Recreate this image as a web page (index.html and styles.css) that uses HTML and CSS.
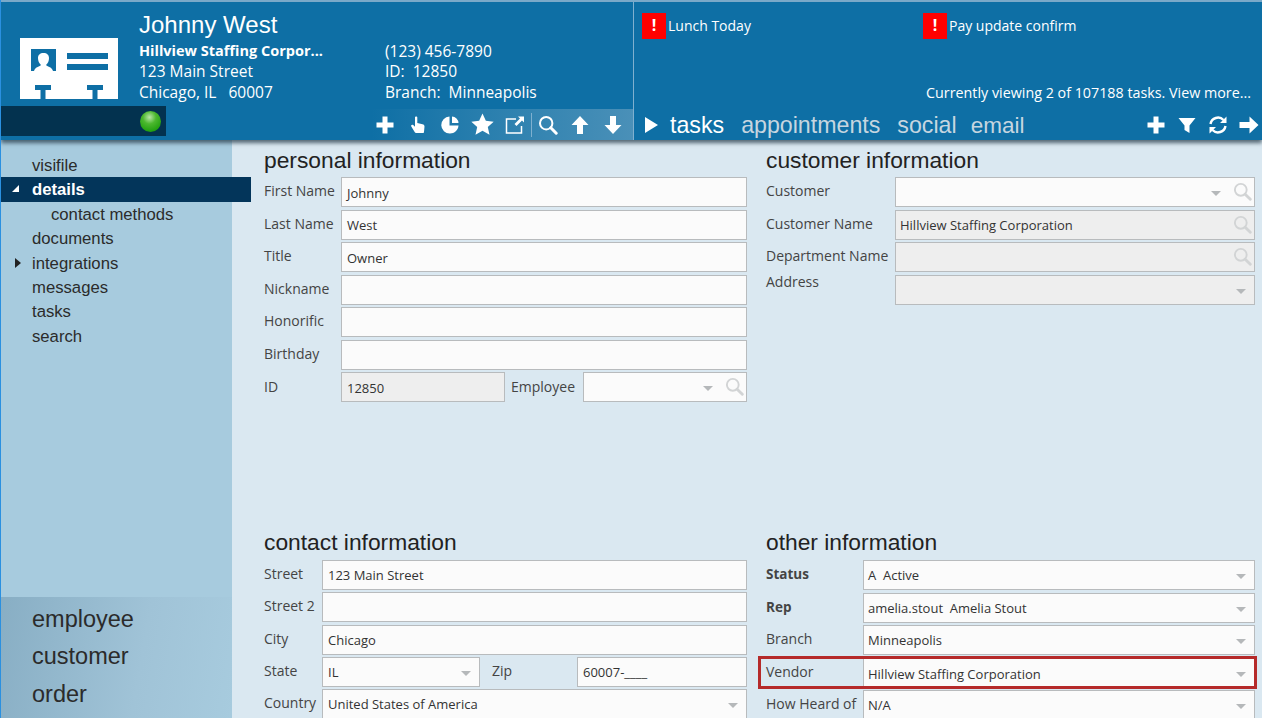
FILE: index.html
```html
<!DOCTYPE html>
<html lang="en">

<head>
    <meta charset="UTF-8">
    <title>Johnny West</title>
    <link rel="stylesheet" href="styles.css">
</head>

<body>
    <svg class="sprites" width="0" height="0">
        <symbol id="i-search" viewBox="0 0 20 20">
            <circle cx="8.2" cy="8.2" r="6.2" fill="none" stroke="currentColor" stroke-width="2" />
            <path d="M12.8 12.8l5.4 5.4" fill="none" stroke="currentColor" stroke-width="3" stroke-linecap="round" />
        </symbol>
        <symbol id="i-plus" viewBox="0 0 20 20">
            <path d="M7.5 1.5h5v6h6v5h-6v6h-5v-6h-6v-5h6z" fill="currentColor" />
        </symbol>
    </svg>

    <header class="topbar">
        <section class="contact-panel">
            <div class="contact-top">
                <svg class="id-card" viewBox="0 0 98 61">
                    <rect width="98" height="61" fill="#fff" />
                    <rect x="11" y="11" width="25" height="22" fill="#0e6fa5" />
                    <path d="M14 33c1-4 5-4 7-6-2-2-3-4-3-7 0-3 2-5 5.500-5s5.500 2 5.500 5c0 3-1 5-3 7 2 2 6 2 7 6z" fill="#fff" />
                    <rect x="47" y="15" width="41" height="6" fill="#0e6fa5" />
                    <rect x="47" y="26" width="41" height="6" fill="#0e6fa5" />
                    <path d="M15 47h16v5h-5.500v9h-5v-9H15zM67 47h16v5h-5.500v9h-5v-9H67z" fill="#0e6fa5" />
                </svg>
                <div class="contact-text">
                    <h1>Johnny West</h1>
                    <div class="contact-columns">
                        <div class="contact-col">
                            <strong>Hillview Staffing Corpor...</strong>
                            <span>123 Main Street</span>
                            <span>Chicago, IL &nbsp; 60007</span>
                        </div>
                        <div class="contact-col">
                            <span>(123) 456-7890</span>
                            <span>ID: &nbsp;12850</span>
                            <span>Branch: &nbsp;Minneapolis</span>
                        </div>
                    </div>
                </div>
            </div>
            <div class="contact-bottom">
                <div class="status-bar"><span class="led"></span></div>
                <div class="toolbar">
                    <svg class="tool"><use href="#i-plus" /></svg>
                    <svg class="tool" viewBox="0 0 20 20">
                        <path d="M7 2.500c0-1.400 2.300-1.400 2.300 0V8l5.200 1.200c1.300.3 2 1.200 2 2.400l-.5 5.400c0 .6-.5 1-1 1H8c-.5 0-.9-.2-1.200-.7L3.300 11.500c-.7-1.200.8-2.400 1.900-1.400L7 11.800z" fill="currentColor" />
                    </svg>
                    <svg class="tool" viewBox="0 0 20 20">
                        <path d="M9.500 1.500v9h9c-.3 4.600-4 8-8.500 8a8.500 8.500 0 0 1-.5-17zM12 1.500a6.800 6.800 0 0 1 6.500 6.500H12zM12.500 12.500h5.300a8 8 0 0 1-5.300 5.300z" fill="currentColor" />
                    </svg>
                    <svg class="tool tool-star" viewBox="0 0 20 20">
                        <path d="M10 .5l2.900 6.300 6.800.7-5.100 4.600 1.500 6.800-6.100-3.500-6.100 3.500 1.500-6.800L.3 7.500l6.800-.7z" fill="currentColor" />
                    </svg>
                    <svg class="tool" viewBox="0 0 20 20">
                        <path d="M11 4H1.500v14h15v-7" fill="none" stroke="currentColor" stroke-width="1.500" />
                        <path d="M13 1.500h6v6l-2-2-5.500 5.500-2-2L15 3.500z" fill="currentColor" />
                    </svg>
                    <span class="tool-divider"></span>
                    <svg class="tool"><use href="#i-search" /></svg>
                    <svg class="tool" viewBox="0 0 20 20">
                        <path d="M10 1l8.500 9H13v9H7v-9H1.500z" fill="currentColor" />
                    </svg>
                    <svg class="tool" viewBox="0 0 20 20">
                        <path d="M10 19l8.500-9H13V1H7v9H1.500z" fill="currentColor" />
                    </svg>
                </div>
            </div>
        </section>

        <section class="activity-panel">
            <div class="alerts">
                <div class="alert"><span class="alert-mark">!</span>Lunch Today</div>
                <div class="alert"><span class="alert-mark">!</span>Pay update confirm</div>
            </div>
            <p class="task-count">Currently viewing 2 of 107188 tasks. View more...</p>
            <div class="tabs">
                <svg class="tab-play" viewBox="0 0 13 16">
                    <path d="M0 0l13 8-13 8z" fill="#fff" />
                </svg>
                <span class="tab active">tasks</span>
                <span class="tab">appointments</span>
                <span class="tab">social</span>
                <span class="tab tab-email">email</span>
                <div class="tab-tools">
                    <svg class="tool"><use href="#i-plus" /></svg>
                    <svg class="tool" viewBox="0 0 20 20">
                        <path d="M1.500 3h17l-6 7.500V18l-5-3v-4.500z" fill="currentColor" />
                    </svg>
                    <svg class="tool" viewBox="0 0 20 20">
                        <path d="M2.500 9a7.600 7.600 0 0 1 13-4" fill="none" stroke="currentColor" stroke-width="2.400" />
                        <path d="M17.500 11a7.600 7.600 0 0 1-13 4" fill="none" stroke="currentColor" stroke-width="2.400" />
                        <path d="M18.500 1.500v6.500H12zM1.500 18.500V12H8z" fill="currentColor" />
                    </svg>
                    <svg class="tool" viewBox="0 0 20 20">
                        <path d="M19.500 10l-9-8.500V7H.5v6h10v5.500z" fill="currentColor" />
                    </svg>
                </div>
            </div>
        </section>
    </header>

    <div class="page">
        <aside class="sidebar">
            <nav class="side-nav">
                <a>visifile</a>
                <a class="selected"><span class="caret-open"></span>details</a>
                <a class="sub">contact methods</a>
                <a>documents</a>
                <a><span class="caret-closed"></span>integrations</a>
                <a>messages</a>
                <a>tasks</a>
                <a>search</a>
            </nav>
            <div class="side-links">
                <a>employee</a>
                <a>customer</a>
                <a>order</a>
            </div>
        </aside>

        <main class="content">
            <section class="form form-personal">
                <h2>personal information</h2>
                <div class="row"><label>First Name</label><div class="field"><span>Johnny</span></div></div>
                <div class="row"><label>Last Name</label><div class="field"><span>West</span></div></div>
                <div class="row"><label>Title</label><div class="field"><span>Owner</span></div></div>
                <div class="row"><label>Nickname</label><div class="field"></div></div>
                <div class="row"><label>Honorific</label><div class="field"></div></div>
                <div class="row"><label>Birthday</label><div class="field"></div></div>
                <div class="row row-low">
                    <label>ID</label>
                    <div class="field locked id-field"><span>12850</span></div>
                    <label class="inline-label employee-label">Employee</label>
                    <div class="field">
                        <i class="arrow"></i>
                        <svg class="lookup"><use href="#i-search" /></svg>
                    </div>
                </div>
            </section>

            <section class="form form-customer">
                <h2>customer information</h2>
                <div class="row">
                    <label>Customer</label>
                    <div class="field">
                        <i class="arrow"></i>
                        <svg class="lookup"><use href="#i-search" /></svg>
                    </div>
                </div>
                <div class="row">
                    <label>Customer Name</label>
                    <div class="field locked">
                        <span>Hillview Staffing Corporation</span>
                        <svg class="lookup"><use href="#i-search" /></svg>
                    </div>
                </div>
                <div class="row">
                    <label>Department Name</label>
                    <div class="field locked"><svg class="lookup"><use href="#i-search" /></svg></div>
                </div>
                <div class="row row-top">
                    <label>Address</label>
                    <div class="field locked"><i class="arrow arrow-end"></i></div>
                </div>
            </section>

            <section class="form form-contact">
                <h2>contact information</h2>
                <div class="row"><label>Street</label><div class="field"><span>123 Main Street</span></div></div>
                <div class="row"><label>Street 2</label><div class="field"></div></div>
                <div class="row"><label>City</label><div class="field"><span>Chicago</span></div></div>
                <div class="row">
                    <label>State</label>
                    <div class="field state-field"><span>IL</span><i class="arrow arrow-end"></i></div>
                    <label class="inline-label zip-label">Zip</label>
                    <div class="field"><span>60007-____</span></div>
                </div>
                <div class="row">
                    <label>Country</label>
                    <div class="field"><span>United States of America</span><i class="arrow arrow-end"></i></div>
                </div>
            </section>

            <section class="form form-other">
                <h2>other information</h2>
                <div class="row">
                    <label class="strong">Status</label>
                    <div class="field"><span>A &nbsp;Active</span><i class="arrow arrow-end"></i></div>
                </div>
                <div class="row">
                    <label class="strong">Rep</label>
                    <div class="field"><span>amelia.stout &nbsp;Amelia Stout</span><i class="arrow arrow-end"></i></div>
                </div>
                <div class="row">
                    <label>Branch</label>
                    <div class="field"><span>Minneapolis</span><i class="arrow arrow-end"></i></div>
                </div>
                <div class="row flagged">
                    <label>Vendor</label>
                    <div class="field"><span>Hillview Staffing Corporation</span><i class="arrow arrow-end"></i></div>
                </div>
                <div class="row">
                    <label>How Heard of</label>
                    <div class="field"><span>N/A</span><i class="arrow arrow-end"></i></div>
                </div>
            </section>
        </main>
    </div>
</body>

</html>
```

FILE: styles.css
```css
* {
    margin: 0;
    padding: 0;
    box-sizing: border-box;
}

html,
body {
    height: 718px;
    overflow: hidden;
}

body {
    display: flex;
    flex-direction: column;
    font-family: "Open Sans", "Noto Sans", sans-serif;
    background: #dae8f1;
    border-left: 1px solid #2a90e0;
    color: #333;
}

.sprites {
    position: absolute;
}

/* top bar */
.topbar {
    position: relative;
    z-index: 2;
    display: flex;
    height: 140px;
    flex-shrink: 0;
    background: #0e6fa5;
    border-top: 2px solid #7aa9c9;
    box-shadow: 0 3px 4px rgba(40, 60, 75, 0.75);
    color: #fff;
}

.contact-panel {
    display: flex;
    flex-direction: column;
    justify-content: space-between;
    width: 633px;
    flex-shrink: 0;
    border-right: 1px solid #7fb0cf;
}

.contact-top {
    display: flex;
}

.id-card {
    width: 98px;
    height: 61px;
    margin: 36px 0 0 19px;
    flex-shrink: 0;
}

.contact-text {
    margin-left: 21px;
}

.contact-text h1 {
    font-family: "Liberation Sans", Arial, sans-serif;
    font-size: 24px;
    font-weight: 400;
    line-height: 28px;
    margin-top: 9px;
}

.contact-columns {
    display: flex;
    margin-top: 1.5px;
}

.contact-col {
    display: flex;
    flex-direction: column;
    width: 246px;
    font-size: 15.5px;
    line-height: 20.7px;
}

.contact-col strong {
    font-size: 14.5px;
}

.contact-bottom {
    display: flex;
    justify-content: space-between;
    align-items: flex-start;
    height: 32px;
}

.status-bar {
    display: flex;
    justify-content: flex-end;
    align-items: center;
    width: 165px;
    height: 30px;
    padding-right: 5px;
    margin-top: -2px;
    background: #03324f;
}

.led {
    width: 21px;
    height: 21px;
    border-radius: 50%;
    background: radial-gradient(circle at 45% 30%, #b9e6a8 0, #4cb82f 35%, #22a010 75%, #2f7f1f 100%);
}

.toolbar {
    display: flex;
    align-items: center;
    gap: 12.6px;
    width: 262px;
    height: 31px;
    margin-top: 1px;
    padding-left: 4px;
    background: linear-gradient(90deg, #0e6fa5 0, #2a7fae 45%, #4a90b8 100%);
}

.tool {
    width: 20px;
    height: 20px;
    color: #fff;
}

.tool-star {
    width: 23px;
    height: 23px;
    margin: 0 -1.5px;
}

.tool-divider {
    width: 1px;
    height: 24px;
    margin: 0 -7px;
    background: #7fb0cf;
}

.activity-panel {
    display: flex;
    flex-direction: column;
    flex: 1;
    min-width: 0;
}

.alerts {
    display: flex;
    padding: 11px 0 0 8px;
    height: 81px;
}

.alert {
    display: flex;
    align-items: flex-start;
    width: 281px;
    font-size: 14px;
    line-height: 26px;
}

.alert-mark {
    width: 24px;
    height: 26px;
    margin-right: 2px;
    background: #f00;
    text-align: center;
    font-weight: 700;
    font-size: 16px;
    line-height: 24px;
}

.task-count {
    font-size: 14.3px;
    line-height: 20px;
    padding-right: 11px;
    text-align: right;
}

.tabs {
    display: flex;
    align-items: center;
    height: 31px;
    margin-top: 6px;
    padding-left: 11px;
}

.tab-play {
    width: 13px;
    height: 16px;
    margin-right: 12px;
}

.tab {
    padding-top: 2px;
    font-family: "Liberation Sans", Arial, sans-serif;
    font-size: 23.200px;
    margin-right: 17px;
    color: #c6d6e0;
}

.tab.active {
    color: #fff;
}

.tab-email {
    margin-left: -3px;
    font-size: 22.500px;
}

.tab-tools {
    display: flex;
    align-items: center;
    gap: 11px;
    margin-left: auto;
    padding-right: 3px;
}

/* sidebar */
.page {
    display: flex;
    flex: 1;
    min-height: 0;
}

.sidebar {
    position: relative;
    z-index: 1;
    display: flex;
    flex-direction: column;
    justify-content: space-between;
    width: 231px;
    flex-shrink: 0;
    background: #a7cbde;
    font-family: "Liberation Sans", Arial, sans-serif;
    color: #2b2b2b;
}

.side-nav {
    padding-top: 13px;
}

.side-nav a {
    position: relative;
    display: block;
    height: 24.4px;
    padding-left: 31px;
    font-size: 16.700px;
    line-height: 26px;
}

.side-nav a.sub {
    padding-left: 50px;
}

.side-nav a.selected {
    margin-right: -19px;
    background: #03355a;
    color: #fff;
    font-weight: 700;
}

.caret-open {
    position: absolute;
    left: 11px;
    top: 8px;
    border-style: solid;
    border-width: 0 0 7px 7px;
    border-color: transparent transparent #fff transparent;
}

.caret-closed {
    position: absolute;
    left: 14px;
    top: 7px;
    border-style: solid;
    border-width: 5px 0 5px 6px;
    border-color: transparent transparent transparent #222;
}

.side-links {
    display: flex;
    flex-direction: column;
    height: 121px;
    padding: 4px 0 0 31px;
    background: linear-gradient(100deg, #88aec4 0, #a0c3d7 60%, #a7cbde 100%);
    font-size: 23.500px;
    line-height: 37.4px;
}

/* forms */
.content {
    display: grid;
    grid-template-columns: 483px 489px;
    grid-template-rows: 382px auto;
    column-gap: 19px;
    flex: 1;
    padding: 8px 0 0 32px;
    min-width: 0;
}

.form h2 {
    height: 29px;
    font-family: "Liberation Sans", Arial, sans-serif;
    font-size: 22.800px;
    font-weight: 400;
    line-height: 24px;
    color: #222;
}

.form-contact h2,
.form-other h2 {
    height: 30px;
}

.row {
    display: flex;
    align-items: center;
    height: 30px;
    margin-bottom: 2.5px;
}

.form-contact .row {
    margin-bottom: 2.25px;
}

.row-top {
    align-items: flex-start;
}

.row label {
    flex-shrink: 0;
    font-size: 14px;
    line-height: 16px;
    color: #444;
    margin-top: -2px;
}

.row-top label {
    margin-top: -1px;
}

.row-low label {
    margin-top: -1px;
}

.row label.strong {
    font-size: 13.500px;
    font-weight: 700;
}

.form-personal .row > label:first-child {
    width: 77px;
}

.form-customer .row > label:first-child {
    width: 129px;
}

.form-contact .row > label:first-child {
    width: 58px;
}

.form-other .row > label:first-child {
    width: 97px;
}

.row .inline-label {
    margin-left: 6px;
    width: 72px;
}

.row .zip-label {
    margin-left: 12px;
    width: 85px;
}

.field {
    position: relative;
    display: flex;
    align-items: center;
    flex: 1;
    min-width: 0;
    height: 30px;
    padding: 1px 4px 0 4px;
    background: #fbfbfb;
    border: 1px solid #b8bbbd;
    font-size: 13px;
    color: #333;
}

.form-personal .field,
.form-contact .field {
    padding-left: 5px;
}

.form-contact .field,
.form-other .field {
    padding-top: 0;
}

.form-other .flagged .field {
    padding-top: 2px;
}

.field.locked {
    background: #eee;
}

.id-field {
    flex: 0 0 164px;
}

.state-field {
    flex: 0 0 158px;
}

.arrow {
    position: absolute;
    right: 33px;
    top: 13px;
    border-style: solid;
    border-width: 5px 5px 0 5px;
    border-color: #b5b8ba transparent transparent transparent;
}

.arrow-end {
    right: 8px;
}

.lookup {
    position: absolute;
    right: 2px;
    top: 4px;
    width: 19px;
    height: 19px;
    color: #d2d4d5;
}

.flagged {
    position: relative;
}

.flagged::after {
    content: "";
    position: absolute;
    inset: -2px -2px -1px -8px;
    border: 3px solid #b52a2a;
}
```
